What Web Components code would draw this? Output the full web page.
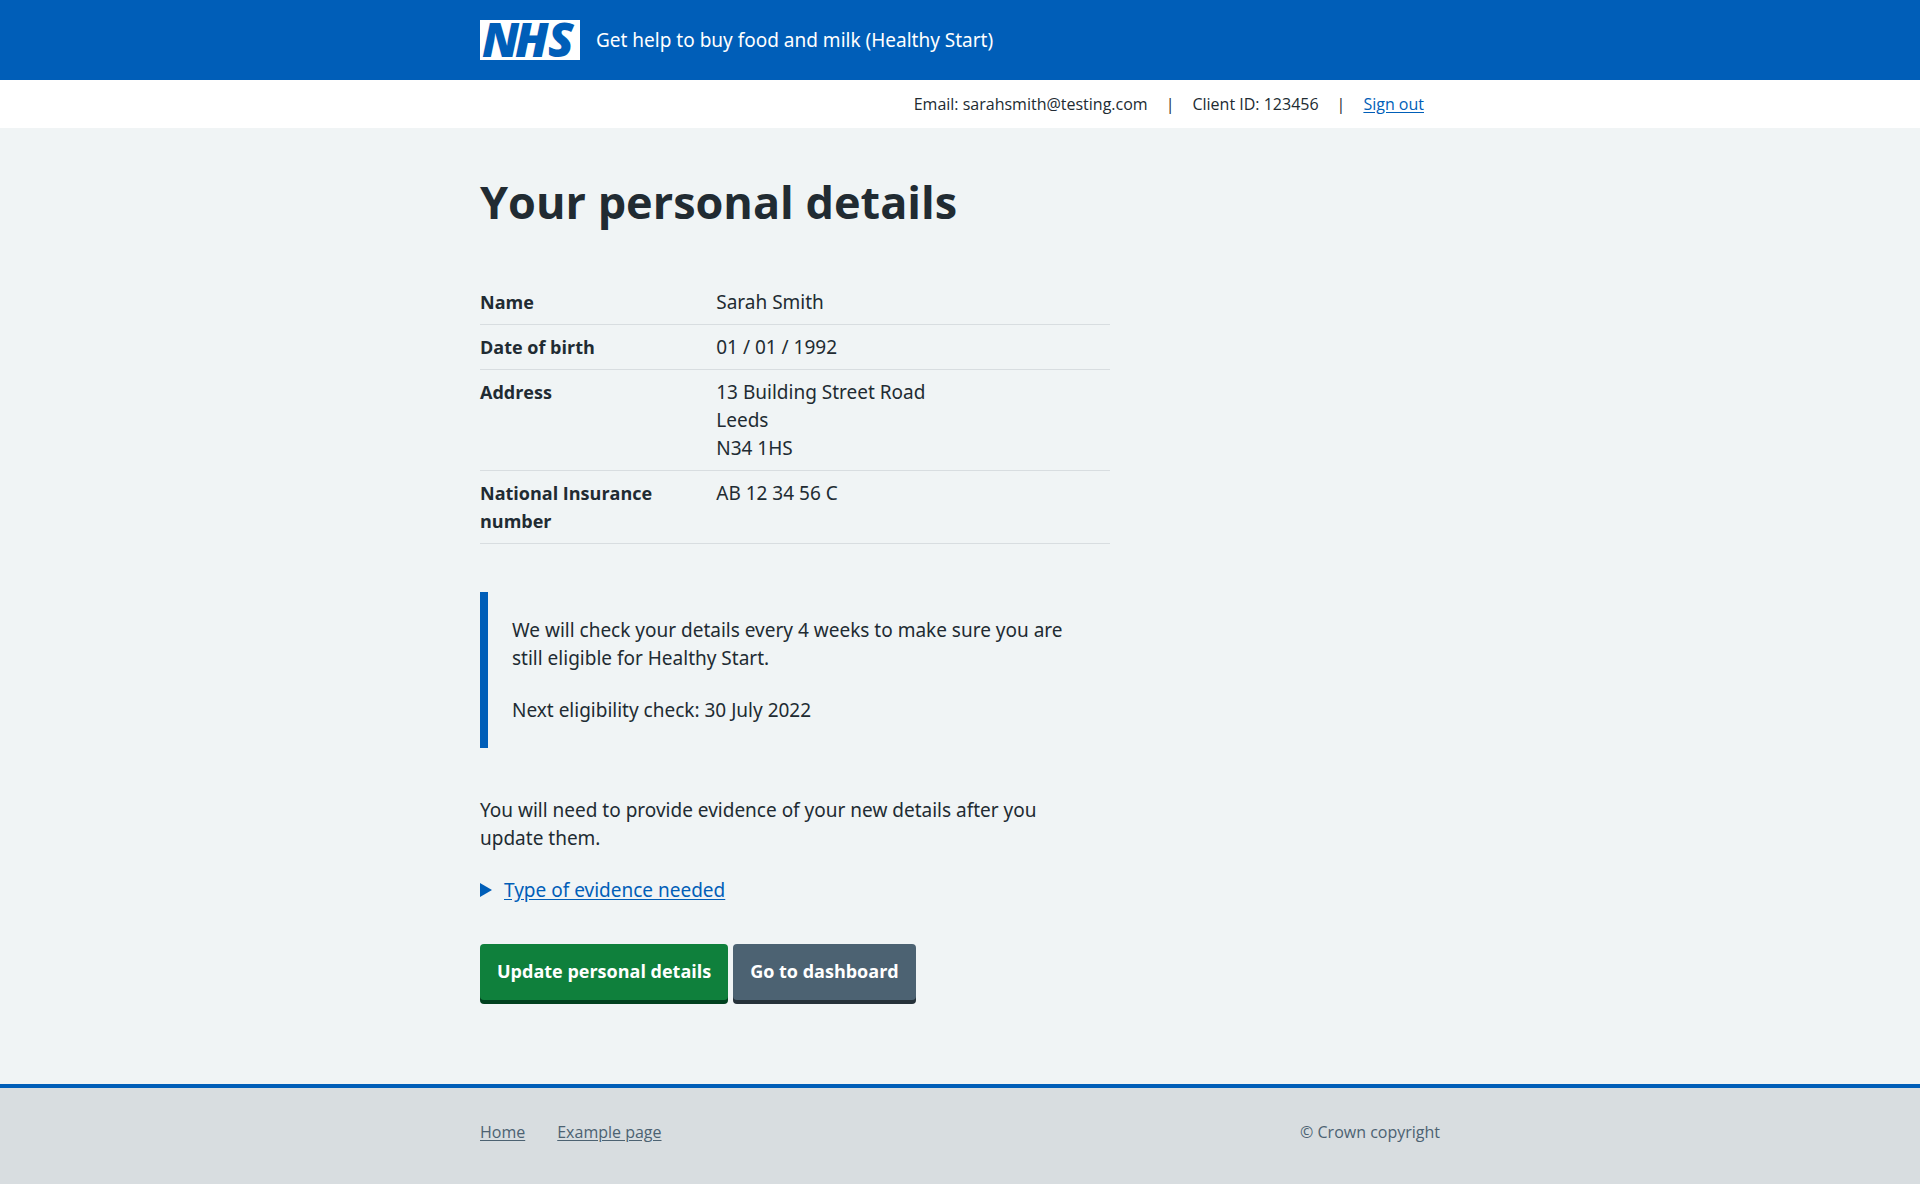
<!DOCTYPE html>
<html lang="en">
<head>
<meta charset="utf-8">
<meta name="viewport" content="width=device-width, initial-scale=1">
<title>Your personal details</title>
<style>
  :root {
    --blue: #005eb8;
    --text: #212b32;
    --secondary: #4c6272;
    --line: #d8dde0;
    --page: #f0f4f5;
    --container: 960px;
    --body-size: 19px;
    --strong-size: 18px;
    --small-size: 16px;
    --strong-font: "Open Sans", "Noto Sans", sans-serif;
  }
  body {
    margin: 0;
    min-height: 100vh;
    display: flex;
    flex-direction: column;
    background: var(--page);
    color: var(--text);
    font-family: "Noto Sans", "Open Sans", sans-serif;
    font-size: var(--body-size);
    line-height: 28px;
  }
</style>
</head>
<body>
<hs-header service="Get help to buy food and milk (Healthy Start)"></hs-header>
<hs-account-bar>
  <span>Email: sarahsmith@testing.com</span>
  <span>Client ID: 123456</span>
</hs-account-bar>
<hs-main>
  <hs-heading>Your personal details</hs-heading>
  <hs-summary></hs-summary>
  <hs-inset>
    <hs-text>We will check your details every 4 weeks to make sure you are still eligible for Healthy Start.</hs-text>
    <hs-text>Next eligibility check: 30 July 2022</hs-text>
  </hs-inset>
  <hs-text>You will need to provide evidence of your new details after you update them.</hs-text>
  <hs-details label="Type of evidence needed">A recent letter or bill that shows your new details.</hs-details>
  <hs-actions>
    <hs-button>Update personal details</hs-button>
    <hs-button variant="secondary">Go to dashboard</hs-button>
  </hs-actions>
</hs-main>
<hs-footer></hs-footer>

<script>
  const define = (name, html) => customElements.define(name, class extends HTMLElement {
    constructor() {
      super();
      const root = this.attachShadow({ mode: "open" });
      root.innerHTML = typeof html === "function" ? html(this) : html;
    }
  });

  define("hs-header", el => `
    <style>
      :host { display: block; background: var(--blue); color: #fff; }
      header { box-sizing: border-box; max-width: var(--container); margin: 0 auto; padding: 20px 0;
        display: flex; align-items: center; gap: 16px; }
      a { display: flex; }
      svg { display: block; width: 100px; height: 40px; overflow: visible; }
      text { font-family: "Open Sans", sans-serif; font-weight: 800; font-style: italic; font-size: 47px; }
    </style>
    <header>
      <a href="#" aria-label="NHS homepage">
        <svg viewBox="0 0 100 40" role="img" aria-label="NHS">
          <path fill="#fff" d="M0 0h100v40H0z"/>
          <text fill="#005eb8" x="2 35 68" y="37">NHS</text>
        </svg>
      </a>
      <span>${el.getAttribute("service")}</span>
    </header>`);

  define("hs-account-bar", `
    <style>
      :host { display: block; background: #fff; font-family: var(--strong-font); font-size: var(--small-size); line-height: 24px; }
      div { box-sizing: border-box; max-width: var(--container); margin: 0 auto; padding: 12px 16px;
        display: flex; justify-content: flex-end; }
      ::slotted(span)::after { content: "|"; margin: 0 18px; }
      a { color: var(--blue); text-underline-offset: 2px; }
    </style>
    <div><slot></slot><a href="#">Sign out</a></div>`);

  define("hs-main", `
    <style>
      :host { display: block; flex: 1 0 auto; }
      main { box-sizing: border-box; width: 100%; max-width: var(--container); margin: 0 auto; padding: 40px 0 80px; }
      div { max-width: 630px; }
    </style>
    <main><div><slot></slot></div></main>`);

  define("hs-heading", `
    <style>
      :host { display: block; margin-bottom: 44px; }
      h1 { margin: 0; font-family: var(--strong-font); font-size: 45px; line-height: 68px; font-weight: 700; }
    </style>
    <h1><slot></slot></h1>`);

  define("hs-summary", `
    <style>
      :host { display: block; margin-bottom: 48px; }
      dl { margin: 0; }
      div { display: grid; grid-template-columns: 3fr 5fr; padding: 8px 0; border-bottom: 1px solid var(--line); }
      dt { font-family: var(--strong-font); font-size: var(--strong-size); font-weight: 700; padding-right: 24px; }
      dd { margin: 0; }
    </style>
    <dl>
      <div><dt>Name</dt><dd>Sarah Smith</dd></div>
      <div><dt>Date of birth</dt><dd>01 / 01 / 1992</dd></div>
      <div><dt>Address</dt><dd>13 Building Street Road<br>Leeds<br>N34 1HS</dd></div>
      <div><dt>National Insurance number</dt><dd>AB 12 34 56 C</dd></div>
    </dl>`);

  define("hs-inset", `
    <style>
      :host { display: flex; flex-direction: column; gap: 24px; margin-bottom: 48px;
        padding: 24px; border-left: 8px solid var(--blue); }
    </style>
    <slot></slot>`);

  define("hs-text", `
    <style>
      :host { display: block; padding-right: 16px; }
      p { margin: 0; }
    </style>
    <p><slot></slot></p>`);

  define("hs-details", el => `
    <style>
      :host { display: block; margin: 24px 0 40px; }
      summary { display: flex; align-items: center; gap: 12px; width: fit-content; color: var(--blue); cursor: pointer; }
      summary::before { content: ""; border: solid transparent; border-width: 7px 0 7px 12px; border-left-color: var(--blue); }
      details[open] summary::before { border-width: 12px 6px 0; border-color: var(--blue) transparent; }
      span { text-decoration: underline; text-underline-offset: 2px; }
      p { margin: 12px 0 0; padding-left: 24px; }
    </style>
    <details>
      <summary><span>${el.getAttribute("label")}</span></summary>
      <p><slot></slot></p>
    </details>`);

  define("hs-actions", `
    <style>:host { display: flex; flex-wrap: wrap; gap: 5px; }</style>
    <slot></slot>`);

  define("hs-button", `
    <style>
      :host { display: block; --face: #0f803c; --shadow: #00401e; }
      :host([variant="secondary"]) { --face: #4c6272; --shadow: #263139; }
      button { font: 700 var(--strong-size)/28px var(--strong-font); color: #fff; background: var(--face); border: 0;
        border-radius: 4px; box-shadow: 0 4px 0 var(--shadow); padding: 13px 17px 15px; margin-bottom: 4px;
        display: block; cursor: pointer; }
    </style>
    <button type="button"><slot></slot></button>`);

  define("hs-footer", `
    <style>
      :host { display: block; background: var(--line); border-top: 4px solid var(--blue); color: var(--secondary);
        font-family: var(--strong-font); font-size: var(--small-size); line-height: 24px; }
      footer { box-sizing: border-box; max-width: var(--container); margin: 0 auto; padding: 32px 0 40px;
        display: flex; justify-content: space-between; }
      nav { display: flex; gap: 32px; }
      a { color: inherit; text-underline-offset: 2px; }
    </style>
    <footer>
      <nav><a href="#">Home</a><a href="#">Example page</a></nav>
      <span>© Crown copyright</span>
    </footer>`);
</script>
</body>
</html>
